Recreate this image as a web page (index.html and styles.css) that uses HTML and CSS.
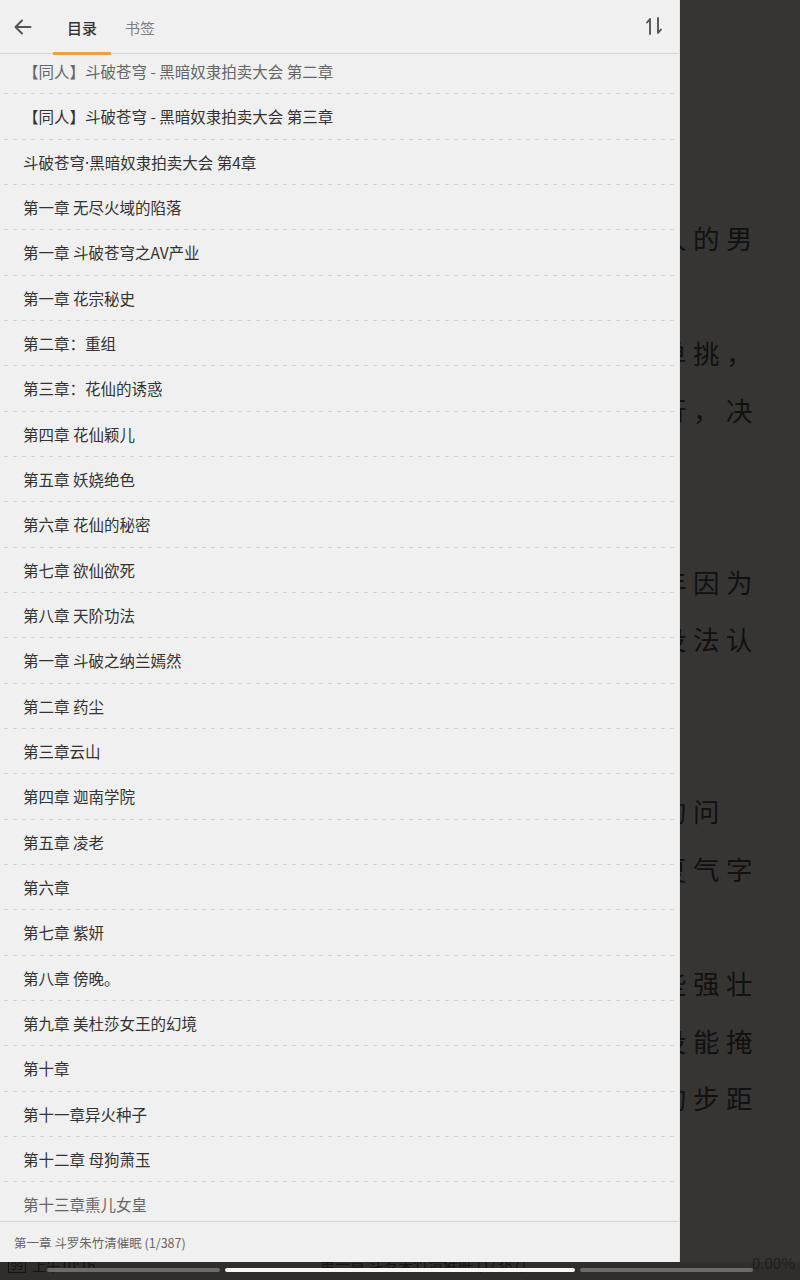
FILE: index.html
```html
<!DOCTYPE html>
<html lang="zh-CN">
<head>
<meta charset="utf-8">
<title>目录</title>
<link rel="stylesheet" href="styles.css">
</head>
<body>
<div class="screen">
  <main class="reader">
    <div class="rline">年人的男</div>
    <div class="rline"></div>
    <div class="rline">你单挑，</div>
    <div class="rline">此行，决</div>
    <div class="rline"></div>
    <div class="rline"></div>
    <div class="rline">当年因为</div>
    <div class="rline">仍没法认</div>
    <div class="rline"></div>
    <div class="rline"></div>
    <div class="rline short">他的问</div>
    <div class="rline">一行夏气字</div>
    <div class="rline"></div>
    <div class="rline">得些强壮</div>
    <div class="rline">丝毫没能掩</div>
    <div class="rline">定的步距</div>
  </main>

  <footer class="statusbar">
    <span class="st-left"><span class="battery">99</span> 上午10:16</span>
    <span class="st-mid">第一章 斗罗朱竹清催眠 (1/387)</span>
    <span class="st-right">0.00%</span>
    <div class="navbars">
      <span class="nb nb-gray nb-l"></span>
      <span class="nb nb-white"></span>
      <span class="nb nb-gray nb-r"></span>
    </div>
  </footer>

  <aside class="drawer">
    <header class="dheader">
      <button class="back" aria-label="返回">
        <svg width="18" height="16" viewBox="0 0 18 16"><path d="M16.5 8H2M8 1.5L1.5 8L8 14.5" fill="none" stroke="#555" stroke-width="2" stroke-linecap="round" stroke-linejoin="round"/></svg>
      </button>
      <div class="tab active">目录</div>
      <div class="tab">书签</div>
      <div class="sort">
        <svg width="18" height="18" viewBox="0 0 18 18"><path d="M5 17V2L2 5.5M13 1V16L16 12.5" fill="none" stroke="#555" stroke-width="1.9" stroke-linecap="round" stroke-linejoin="round"/></svg>
      </div>
    </header>
    <div class="listwrap">
      <ul class="chapters">
        <li class="faded">【同人】斗破苍穹 - 黑暗奴隶拍卖大会 第二章</li>
        <li>【同人】斗破苍穹 - 黑暗奴隶拍卖大会 第三章</li>
        <li>斗破苍穹<span class="dot">·</span>黑暗奴隶拍卖大会 第4章</li>
        <li>第一章 无尽火域的陷落</li>
        <li>第一章 斗破苍穹之AV产业</li>
        <li>第一章 花宗秘史</li>
        <li>第二章：重组</li>
        <li>第三章：花仙的诱惑</li>
        <li>第四章 花仙颖儿</li>
        <li>第五章 妖娆绝色</li>
        <li>第六章 花仙的秘密</li>
        <li>第七章 欲仙欲死</li>
        <li>第八章 天阶功法</li>
        <li>第一章 斗破之纳兰嫣然</li>
        <li>第二章 药尘</li>
        <li>第三章云山</li>
        <li>第四章 迦南学院</li>
        <li>第五章 凌老</li>
        <li>第六章</li>
        <li>第七章 紫妍</li>
        <li>第八章 傍晚。</li>
        <li>第九章 美杜莎女王的幻境</li>
        <li>第十章</li>
        <li>第十一章异火种子</li>
        <li>第十二章 母狗萧玉</li>
        <li class="faded">第十三章熏儿女皇</li>
      </ul>
    </div>
    <div class="dfooter">第一章 斗罗朱竹清催眠 (1/387)</div>
  </aside>
</div>
</body>
</html>
```

FILE: styles.css
```css
* { box-sizing: border-box; }
html, body { margin: 0; padding: 0; }
body {
  width: 800px;
  height: 1280px;
  overflow: hidden;
  background: #363534;
  font-family: "Noto Sans CJK SC", "Noto Sans", sans-serif;
}
.screen {
  position: relative;
  width: 800px;
  height: 1280px;
  display: flex;
  flex-direction: column;
  overflow: hidden;
}

/* reader underneath */
.reader {
  flex: 1;
  padding: 209px 41px 0 48px;
  overflow: hidden;
}
.rline {
  height: 57.33px;
  line-height: 57.33px;
  font-size: 26.5px;
  letter-spacing: 6.5px;
  color: #111;
  white-space: nowrap;
  text-align: right;
  overflow: hidden;
}
.rline.short { padding-right: 33px; }

.statusbar {
  position: relative;
  height: 18px;
  flex: none;
  display: flex;
  align-items: flex-start;
  background: #2f2e2d;
  color: #141414;
  font-size: 14px;
  line-height: 14px;
}
.st-left { margin: -5px 0 0 8px; width: 312px; display: flex; align-items: center; gap: 6px; }
.battery {
  border: 1.5px solid #141414;
  font-size: 11px;
  padding: 1px 2px;
  line-height: 12px;
}
.st-mid { margin-top: -5px; font-size: 15px; }
.st-right { margin: -6px 5px 0 auto; font-size: 15px; color: #1d1d1d; }
.navbars {
  position: absolute;
  left: 0;
  top: 6px;
  width: 800px;
  height: 4px;
}
.nb { position: absolute; top: 0; height: 4px; border-radius: 2px; }
.nb-gray { background: #6c6b6b; width: 173px; }
.nb-l { left: 47px; }
.nb-r { left: 580px; }
.nb-white { left: 225px; width: 350px; background: #f6f6f6; }

/* drawer overlay */
.drawer {
  position: absolute;
  left: 0;
  top: 0;
  width: 680px;
  height: 1262px;
  background: #f0f0f0;
  display: flex;
  flex-direction: column;
  border-right: 1px solid #e2e2e2;
}
.dheader {
  height: 54px;
  flex: none;
  display: flex;
  align-items: stretch;
  border-bottom: 1.5px solid #d5d5d5;
}
.back {
  width: 45px;
  border: 0;
  background: none;
  padding: 0;
  display: flex;
  align-items: center;
  justify-content: center;
}
.tab {
  width: 58px;
  display: flex;
  align-items: center;
  justify-content: center;
  font-size: 15px;
  color: #7e7e7e;
  padding-top: 1px;
}
.tab:first-of-type { margin-left: 8px; }
.tab.active {
  color: #333;
  font-weight: 500;
  border-bottom: 3px solid #efa03e;
  padding-top: 4px;
  margin-bottom: -1.5px;
}
.sort {
  margin-left: auto;
  width: 50px;
  display: flex;
  align-items: center;
  justify-content: center;
  padding-bottom: 1px;
}

.listwrap {
  flex: 1;
  overflow: hidden;
}
.chapters {
  list-style: none;
  margin: -5px 0 0;
  padding: 0;
}
.chapters li {
  height: 45.33px;
  line-height: 44px;
  margin: 0 4px;
  padding-left: 19px;
  font-size: 15.5px;
  color: #333;
  white-space: nowrap;
  background: repeating-linear-gradient(to right, #d3d3d3 0 4px, transparent 4px 9px) left bottom / 100% 1px no-repeat;
}
.chapters li.faded { color: #666; }
.dot { font-family: "Noto Sans", sans-serif; }

.dfooter {
  flex: none;
  height: 41px;
  border-top: 1.5px solid #d5d5d5;
  padding: 0 0 0 14px;
  display: flex;
  align-items: center;
  font-size: 12.5px;
  color: #666;
}
```
